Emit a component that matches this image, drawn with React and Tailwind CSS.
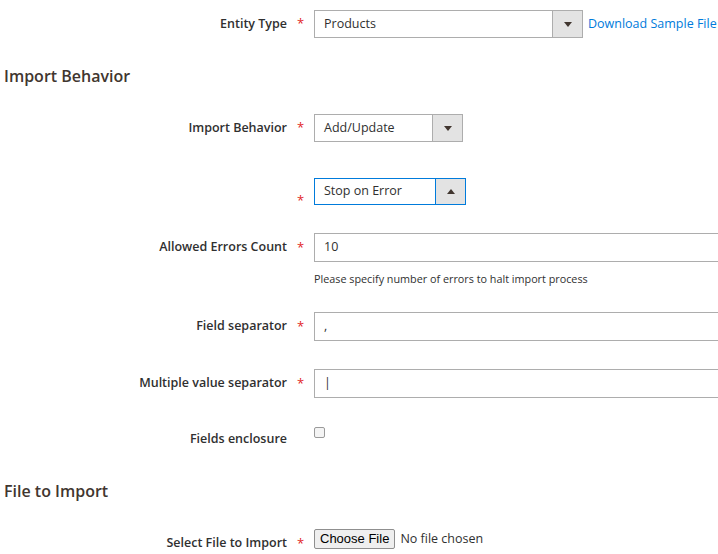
import React from "react";

const font = { fontFamily: '"Open Sans", "Noto Sans", sans-serif' };

function Label({ children, required = true, starClass = "" }) {
  return (
    <div className="flex items-center shrink-0">
      <div className="w-[287px] text-right text-[12.5px] font-semibold text-[#303030]">{children}</div>
      <div className={`w-[27px] text-center text-[13px] text-[#e22626] ${starClass}`}>{required ? "*" : ""}</div>
    </div>
  );
}

function Arrow({ up = false }) {
  return (
    <svg width="8" height="5" viewBox="0 0 8 5">
      {up ? <path d="M0 5 L4 0 L8 5 Z" fill="#41362f" /> : <path d="M0 0 L8 0 L4 5 Z" fill="#41362f" />}
    </svg>
  );
}

function Select({ value, width, up = false, focused = false, arrowW = 30, height = 28 }) {
  const border = focused ? "border-[#007bdb]" : "border-[#adadad]";
  return (
    <div className={`flex shrink-0 border ${border} bg-white`} style={{ width, height }}>
      <div className="flex-1 flex items-center pl-[9px] text-[12.5px] text-[#303030]">{value}</div>
      <div className={`flex items-center justify-center border-l ${border} bg-[#e3e3e3]`} style={{ width: arrowW }}>
        <Arrow up={up} />
      </div>
    </div>
  );
}

function TextInput({ value }) {
  return (
    <div className="shrink-0 w-[420px] h-[29px] border border-[#adadad] bg-white flex items-center pl-[9px] text-[12.5px] text-[#303030]">
      {value}
    </div>
  );
}

export default function App() {
  return (
    <div className="w-[718px] h-[554px] bg-white overflow-hidden" style={font}>
      <div className="flex items-center mt-[10px] h-[28px]">
        <Label>Entity Type</Label>
        <Select value="Products" width={269} />
        <a className="ml-[5px] text-[12.5px] text-[#007bdb] whitespace-nowrap">Download Sample File</a>
      </div>

      <div className="mt-[26px] pl-[4px] text-[16px] font-semibold text-[#41362f] leading-[24px]">Import Behavior</div>

      <div className="flex items-center mt-[26px] h-[28px]">
        <Label>Import Behavior</Label>
        <Select value="Add/Update" width={149} />
      </div>

      <div className="flex items-center mt-[36px] h-[27px]">
        <Label starClass="translate-y-[9px]"> </Label>
        <Select value="Stop on Error" width={152} height={27} up focused />
      </div>

      <div className="flex items-center mt-[28px] h-[29px]">
        <Label>Allowed Errors Count</Label>
        <TextInput value="10" />
      </div>
      <div className="pl-[314px] mt-[9px] text-[10.8px] leading-[15px] text-[#303030]">
        Please specify number of errors to halt import process
      </div>

      <div className="flex items-center mt-[26px] h-[29px]">
        <Label>Field separator</Label>
        <TextInput value="," />
      </div>

      <div className="flex items-center mt-[28px] h-[29px]">
        <Label>Multiple value separator</Label>
        <TextInput value="|" />
      </div>

      <div className="flex items-start mt-[29px] h-[21px]">
        <Label required={false}>
          <span className="inline-block translate-y-[3px]">Fields enclosure</span>
        </Label>
        <div className="w-[11px] h-[11px] border border-[#9a9a9a] rounded-[2px] bg-[#f4f4f4]" />
      </div>

      <div className="mt-[31px] pl-[4px] text-[16px] font-semibold text-[#41362f] leading-[24px]">File to Import</div>

      <div className="flex items-center mt-[26px] h-[20px]">
        <Label starClass="translate-y-[5px]">
          <span className="inline-block translate-y-[4px]">Select File to Import</span>
        </Label>
        <div className="flex items-center">
          <div
            className="h-[20px] px-[5px] border border-[#8f8f8f] rounded-[2px] bg-[#efefef] flex items-center text-[13px] text-black"
            style={{ fontFamily: '"Liberation Sans", Arial, sans-serif' }}
          >
            Choose File
          </div>
          <span className="ml-[5px] text-[12.5px] text-[#303030]">No file chosen</span>
        </div>
      </div>
    </div>
  );
}
